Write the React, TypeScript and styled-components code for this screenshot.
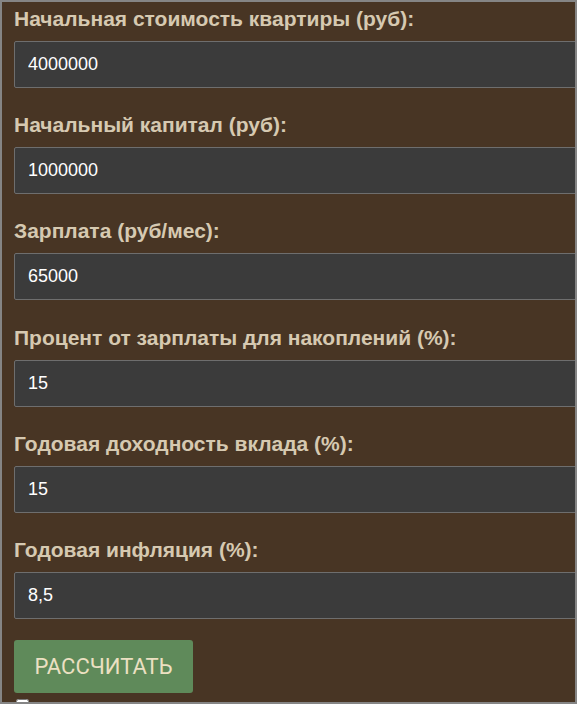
import React from 'react'
import styled, { createGlobalStyle } from 'styled-components'

const GlobalStyle = createGlobalStyle`
  html, body {
    margin: 0;
    padding: 0;
    background: #483524;
  }
`

const Frame = styled.div`
  box-sizing: border-box;
  width: 577px;
  height: 704px;
  border: 2px solid #858585;
  background: #483524;
  overflow: hidden;
  padding: 4.5px 0 0 12px;
`

const Field = styled.div`
  margin-bottom: 25.4px;
`

const Label = styled.label`
  display: block;
  font-family: 'Liberation Sans', Arial, sans-serif;
  font-weight: 700;
  font-size: 21px;
  line-height: 24px;
  color: #d6c9b1;
  margin-bottom: 10px;
  white-space: nowrap;
`

const Input = styled.input`
  box-sizing: border-box;
  display: block;
  width: 620px;
  height: 47px;
  margin: 0;
  padding: 0 13px;
  border: 1px solid #6e6e6e;
  border-radius: 2px;
  background: #3b3b3b;
  color: #ffffff;
  font-family: 'Liberation Sans', Arial, sans-serif;
  font-size: 18px;
  outline: none;
`

const CalcButton = styled.button`
  display: block;
  box-sizing: border-box;
  width: 179px;
  height: 53px;
  margin: -4.4px 0 0;
  border: none;
  border-radius: 3px;
  background: #5f8a5a;
  color: #ece0c2;
  font-family: Roboto, 'Liberation Sans', sans-serif;
  font-size: 22px;
  font-weight: 400;
  text-transform: uppercase;
  cursor: pointer;
`

const Check = styled.input`
  display: block;
  margin: 6px 0 0 2px;
  width: 13px;
  height: 13px;
`

const fields = [
  { label: 'Начальная стоимость квартиры (руб):', value: '4000000' },
  { label: 'Начальный капитал (руб):', value: '1000000' },
  { label: 'Зарплата (руб/мес):', value: '65000' },
  { label: 'Процент от зарплаты для накоплений (%):', value: '15' },
  { label: 'Годовая доходность вклада (%):', value: '15' },
  { label: 'Годовая инфляция (%):', value: '8,5' },
]

export default function App() {
  return (
    <>
      <GlobalStyle />
      <Frame>
        {fields.map((f, i) => (
          <Field key={i}>
            <Label>{f.label}</Label>
            <Input type="text" defaultValue={f.value} />
          </Field>
        ))}
        <CalcButton>Рассчитать</CalcButton>
        <Check type="checkbox" />
      </Frame>
    </>
  )
}
